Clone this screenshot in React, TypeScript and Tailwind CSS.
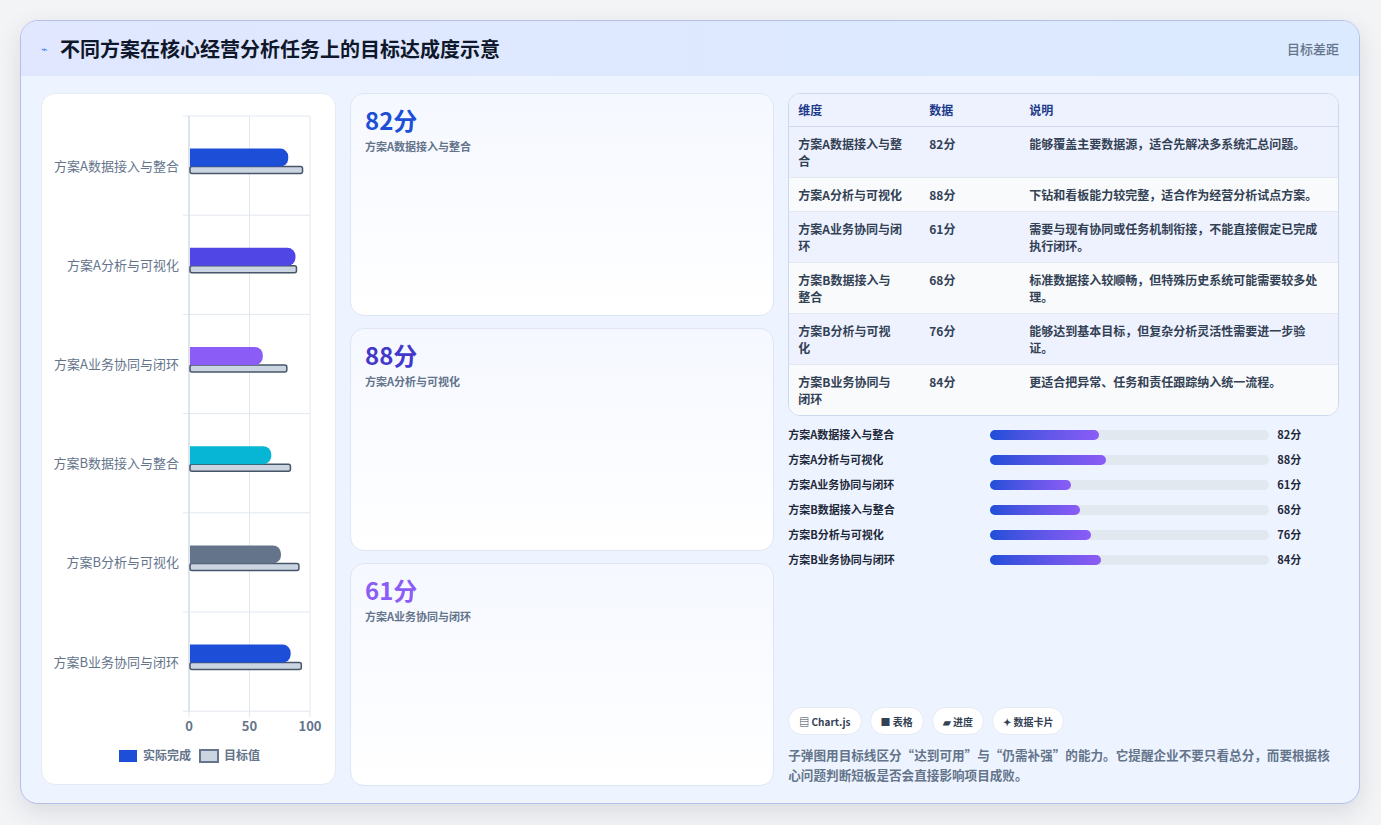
import React from "react";

const rows = [
  { name: "方案A数据接入与整合", v: 82, t: 93, color: "#1d4ed8", desc: "能够覆盖主要数据源，适合先解决多系统汇总问题。" },
  { name: "方案A分析与可视化", v: 88, t: 88, color: "#4f46e5", desc: "下钻和看板能力较完整，适合作为经营分析试点方案。" },
  { name: "方案A业务协同与闭环", v: 61, t: 80, color: "#8b5cf6", desc: "需要与现有协同或任务机制衔接，不能直接假定已完成执行闭环。" },
  { name: "方案B数据接入与整合", v: 68, t: 83, color: "#06b6d4", desc: "标准数据接入较顺畅，但特殊历史系统可能需要较多处理。" },
  { name: "方案B分析与可视化", v: 76, t: 90, color: "#64748b", desc: "能够达到基本目标，但复杂分析灵活性需要进一步验证。" },
  { name: "方案B业务协同与闭环", v: 84, t: 92, color: "#1d4ed8", desc: "更适合把异常、任务和责任跟踪纳入统一流程。" },
];

const font = { fontFamily: '"Noto Sans CJK SC", "Noto Sans", sans-serif' };

function Chart() {
  const x0 = 147, w = 121, top = 22, rowH = 99.2;
  return (
    <svg width="294" height="691" className="block">
      {[0, 50, 100].map((t) => (
        <line key={t} x1={x0 + (w * t) / 100} x2={x0 + (w * t) / 100} y1={top} y2={top + rowH * 6 + 6} stroke="#e2e8f0" />
      ))}
      {Array.from({ length: 7 }).map((_, i) => (
        <line key={i} x1={x0 - 6} x2={x0 + w} y1={top + rowH * i} y2={top + rowH * i} stroke="#e2e8f0" />
      ))}
      <line x1={x0} x2={x0} y1={top} y2={top + rowH * 6} stroke="#cbd5e1" />
      {rows.map((r, i) => {
        const cy = top + rowH * i + rowH / 2;
        return (
          <g key={r.name}>
            <text x={x0 - 10} y={cy + 5} textAnchor="end" fontSize="13" fill="#64748b">{r.name}</text>
            <rect x={x0 + 1} y={cy + 1} width={(w * r.t) / 100} height="7" rx="2" fill="#cbd5e1" stroke="#475569" strokeWidth="1.5" />
            <path d={`M${x0 + 1} ${cy - 17} H${x0 + (w * r.v) / 100 - 8} a8 8 0 0 1 8 8 v2 a8 8 0 0 1 -8 8 H${x0 + 1} Z`} fill={r.color} />
          </g>
        );
      })}
      {[0, 50, 100].map((t) => (
        <text key={t} x={x0 + (w * t) / 100} y={top + rowH * 6 + 20} textAnchor="middle" fontSize="13" fontWeight="600" fill="#64748b">{t}</text>
      ))}
      <rect x="77" y="656" width="18" height="12" fill="#1d4ed8" />
      <text x="101" y="666" fontSize="12" fontWeight="600" fill="#64748b">实际完成</text>
      <rect x="158" y="656" width="18" height="12" fill="#cbd5e1" stroke="#64748b" strokeWidth="2" />
      <text x="182" y="666" fontSize="12" fontWeight="600" fill="#64748b">目标值</text>
    </svg>
  );
}

export default function App() {
  const cards = [
    { v: "82分", label: "方案A数据接入与整合", c: "text-[#1d4ed8]" },
    { v: "88分", label: "方案A分析与可视化", c: "text-[#4338ca]" },
    { v: "61分", label: "方案A业务协同与闭环", c: "text-[#8b5cf6]" },
  ];
  return (
    <div className="min-h-[825px] w-[1381px] bg-[#f3f4f6] pt-5 pl-5" style={font}>
      <div className="w-[1340px] h-[784px] rounded-[18px] border border-[#b4c0e8] bg-[#eef4ff] overflow-hidden shadow-[0_8px_24px_rgba(30,41,59,0.12)] flex flex-col">
        <div className="h-[55px] shrink-0 bg-gradient-to-r from-[#e0e7ff] to-[#dbeafe] flex items-center justify-between px-5">
          <div className="flex items-center gap-3">
            <span className="text-[#3b82f6] text-[11px]">⌁</span>
            <span className="text-[20px] font-bold text-[#0f172a]">不同方案在核心经营分析任务上的目标达成度示意</span>
          </div>
          <span className="text-[13px] text-[#64748b] font-medium">目标差距</span>
        </div>
        <div className="flex gap-[14px] px-5 pt-[17px]">
          <div className="w-[295px] h-[692px] rounded-[14px] bg-white border border-[#e5eaf3]">
            <Chart />
          </div>
          <div className="w-[426px] flex flex-col gap-3">
            {cards.map((c) => (
              <div key={c.v} className="h-[223px] rounded-[14px] bg-gradient-to-b from-[#f5f8ff] to-white border border-[#dfe6f3] px-[14px] pt-[10px]">
                <div className={`text-[24px] font-bold leading-[32px] ${c.c}`}>{c.v}</div>
                <div className="text-[11px] font-semibold text-[#64748b] mt-[2px]">{c.label}</div>
              </div>
            ))}
          </div>
          <div className="w-[553px] h-[692px] flex flex-col">
            <div className="rounded-[12px] border border-[#cfd8ea] overflow-hidden bg-[#f8fafc]">
              <table className="w-full table-fixed text-[12px] font-semibold text-[#334155]">
                <thead>
                  <tr className="bg-[#eef2ff] border-b border-[#cfd8ea] text-[#1e3a8a]">
                    <th className="text-left font-semibold px-[9px] h-[32px] w-[131px]">维度</th>
                    <th className="text-left font-semibold px-[9px] w-[100px]">数据</th>
                    <th className="text-left font-semibold px-[9px]">说明</th>
                  </tr>
                </thead>
                <tbody>
                  {rows.map((r, i) => (
                    <tr key={r.name} className={`${i % 2 === 0 ? "bg-[#eef2ff]" : "bg-[#f8fafc]"} border-b border-[#e2e8f0] last:border-b-0 align-top`}>
                      <td className="pl-[9px] pr-[18px] py-[8px] leading-[17px]">{r.name}</td>
                      <td className="px-[9px] py-[8px] leading-[17px]">{r.v}分</td>
                      <td className="pl-[9px] pr-[14px] py-[8px] leading-[17px]">{r.desc}</td>
                    </tr>
                  ))}
                </tbody>
              </table>
            </div>
            <div className="flex flex-col gap-[7px] mt-[10px]">
              {rows.map((r) => (
                <div key={r.name} className="flex items-center h-[18px] text-[11px] font-bold text-[#1e293b]">
                  <span className="w-[202px]">{r.name}</span>
                  <div className="w-[279px] h-[10px] rounded-full bg-[#e2e8f0]">
                    <div className="h-full rounded-full bg-gradient-to-r from-[#1d4ed8] to-[#8b5cf6]" style={{ width: r.v * 1.32 }} />
                  </div>
                  <span className="ml-2">{r.v}分</span>
                </div>
              ))}
            </div>
            <div className="mt-auto flex gap-2">
              {["▤ Chart.js", "■ 表格", "▰ 进度", "✦ 数据卡片"].map((t) => (
                <span key={t} className="h-[28px] px-[10px] rounded-full bg-white border border-[#e5eaf3] text-[10px] font-bold text-[#334155] flex items-center">{t}</span>
              ))}
            </div>
            <p className="mt-[10px] text-[12.6px] leading-[20px] font-semibold text-[#64748b]">
              子弹图用目标线区分“达到可用”与“仍需补强”的能力。它提醒企业不要只看总分，而要根据核心问题判断短板是否会直接影响项目成败。
            </p>
          </div>
        </div>
      </div>
    </div>
  );
}
